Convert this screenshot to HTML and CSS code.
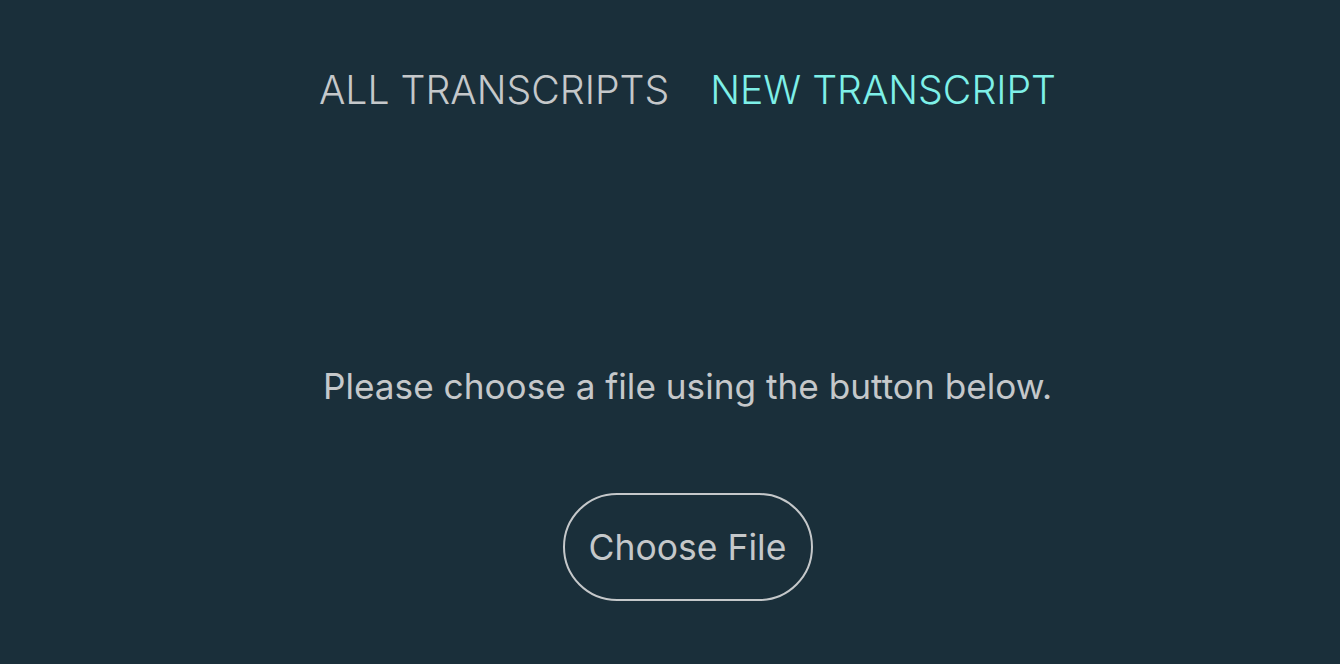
FILE: index.html
```html
<!DOCTYPE html>
<html lang="en">
<head>
<meta charset="utf-8">
<title>Transcripts</title>
<link rel="stylesheet" href="styles.css">
</head>
<body>
<div class="page">
  <nav class="nav">
    <a class="nav-link" href="#">ALL TRANSCRIPTS</a>
    <a class="nav-link active" href="#">NEW TRANSCRIPT</a>
  </nav>
  <main class="main">
    <p class="hint">Please choose a file using the button below.</p>
    <button class="choose">Choose File</button>
  </main>
</div>
</body>
</html>
```
FILE: styles.css
```css
html, body {
  margin: 0;
  padding: 0;
  height: 100%;
}
body {
  background: #1a2f3a;
  font-family: Inter, "Noto Sans", sans-serif;
  color: #c5c8ca;
}
.page {
  padding-left: 35px;
  display: flex;
  flex-direction: column;
  align-items: center;
}
.nav {
  display: flex;
  gap: 41px;
  padding-top: 66px;
}
.nav-link {
  font-size: 39.2px;
  font-weight: 300;
  line-height: 48px;
  color: #c5c8ca;
  text-decoration: none;
}
.nav-link.active {
  color: #7ef0e8;
}
.main {
  display: flex;
  flex-direction: column;
  align-items: center;
  padding-top: 252px;
}
.hint {
  margin: 0;
  font-size: 35.2px;
  font-weight: 400;
  line-height: 40px;
}
.choose {
  margin-top: 87px;
  width: 250px;
  height: 108px;
  border: 2px solid #c5c8ca;
  border-radius: 54px;
  background: transparent;
  color: #c5c8ca;
  font-family: Inter, "Noto Sans", sans-serif;
  font-size: 35.5px;
  font-weight: 400;
  padding: 0;
}
```
